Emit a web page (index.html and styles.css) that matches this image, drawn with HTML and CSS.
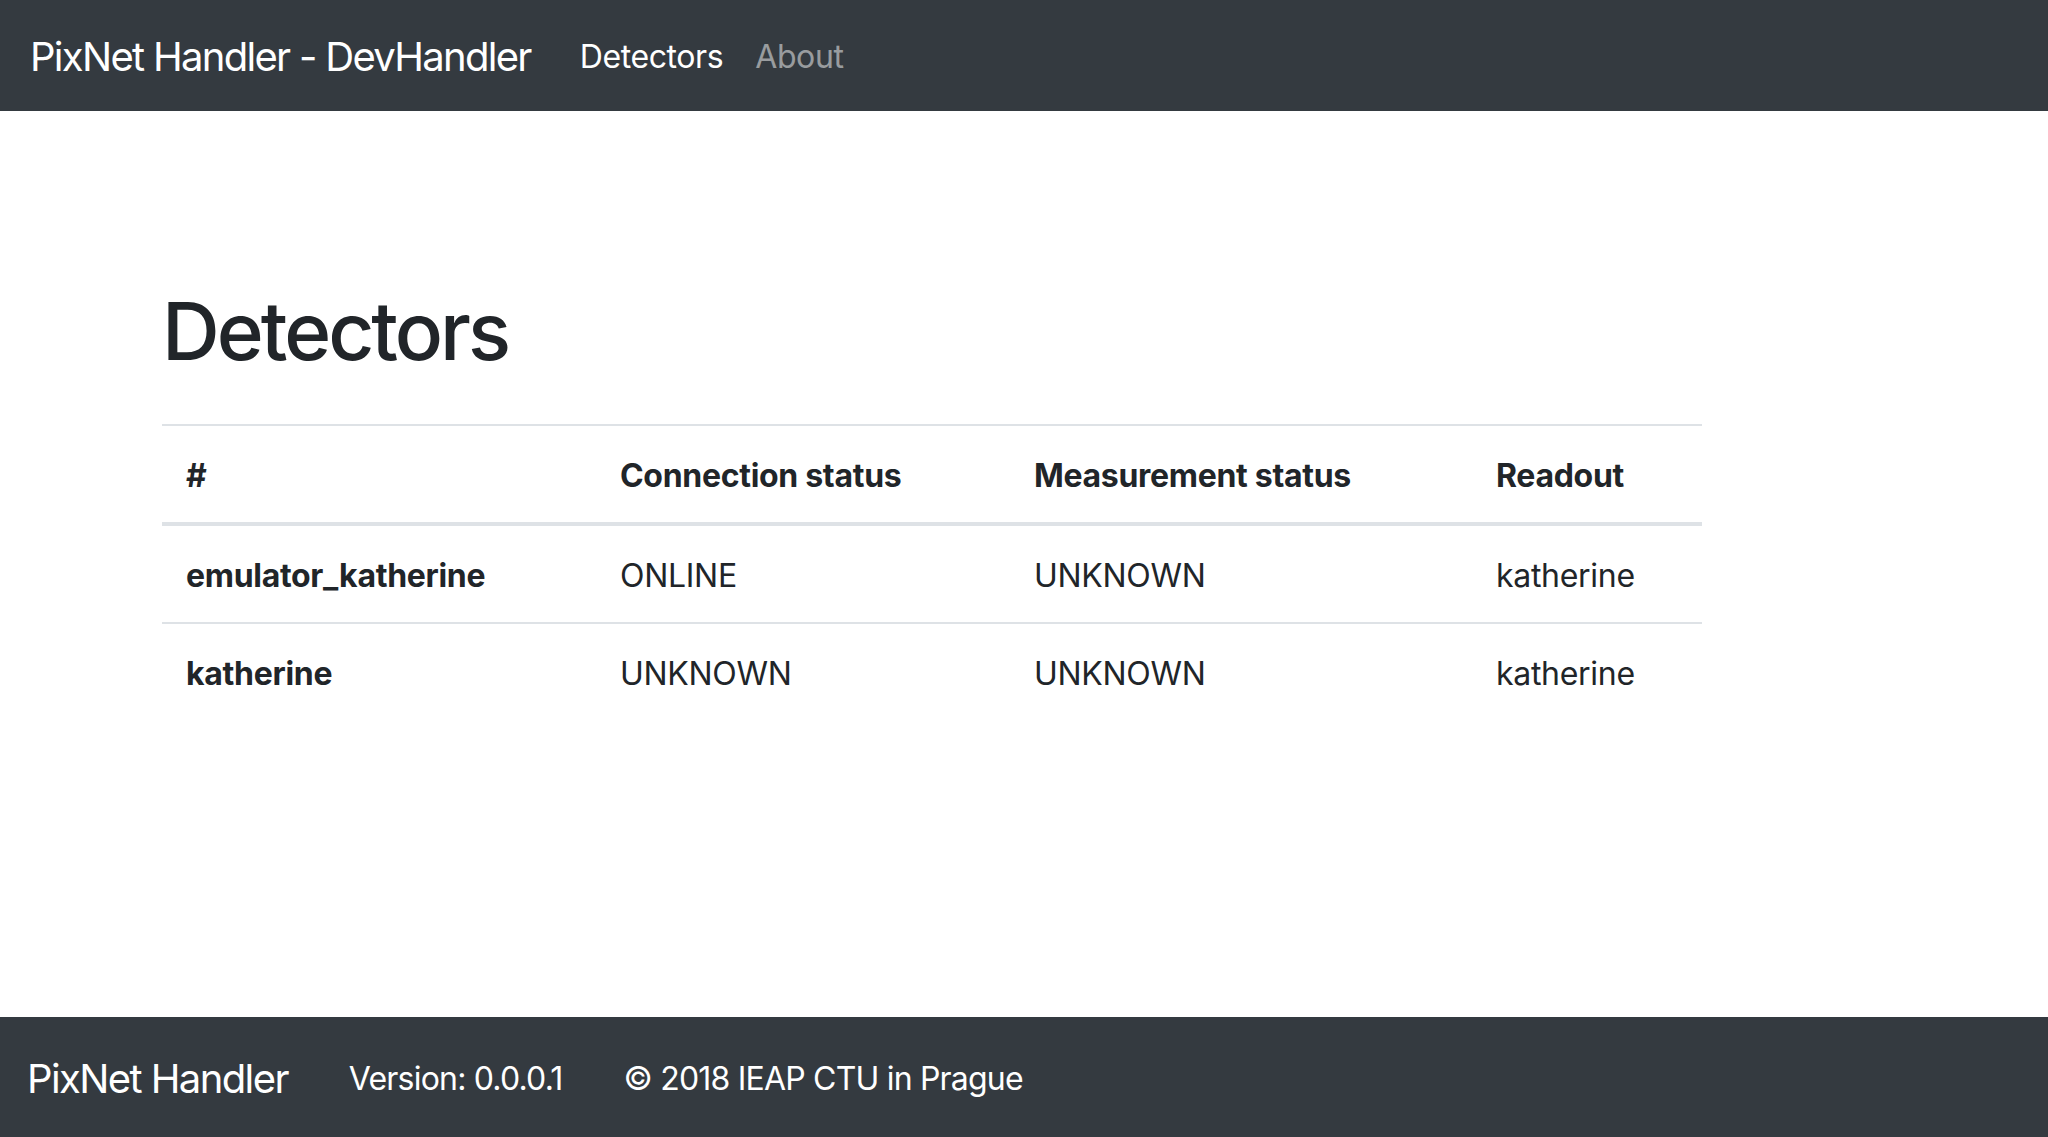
FILE: index.html
```html
<!DOCTYPE html>
<html lang="en">
<head>
<meta charset="utf-8">
<title>PixNet Handler - DevHandler</title>
<link rel="stylesheet" href="styles.css">
</head>
<body>
<div class="page">
  <nav class="navbar">
    <a class="brand" href="#">PixNet Handler - DevHandler</a>
    <ul class="nav">
      <li><a class="nav-link active" href="#">Detectors</a></li>
      <li><a class="nav-link" href="#">About</a></li>
    </ul>
  </nav>

  <main class="main">
    <h1 class="title">Detectors</h1>
    <table class="table">
      <thead>
        <tr>
          <th class="col-id">#</th>
          <th class="col-conn">Connection status</th>
          <th class="col-meas">Measurement status</th>
          <th class="col-read">Readout</th>
        </tr>
      </thead>
      <tbody>
        <tr>
          <th>emulator_katherine</th>
          <td>ONLINE</td>
          <td>UNKNOWN</td>
          <td>katherine</td>
        </tr>
        <tr>
          <th>katherine</th>
          <td>UNKNOWN</td>
          <td>UNKNOWN</td>
          <td>katherine</td>
        </tr>
      </tbody>
    </table>
  </main>

  <footer class="footer">
    <span class="footer-brand">PixNet Handler</span>
    <span class="footer-text">Version: 0.0.0.1</span>
    <span class="footer-text">© 2018 IEAP CTU in Prague</span>
  </footer>
</div>
</body>
</html>
```

FILE: styles.css
```css
html, body {
  margin: 0;
  padding: 0;
}

body {
  font-family: Inter, "Liberation Sans", sans-serif;
  color: #212529;
  background: #fff;
}

.page {
  min-height: 100vh;
  display: flex;
  flex-direction: column;
}

/* Navbar */
.navbar {
  height: 111px;
  box-sizing: border-box;
  background: #343a40;
  display: flex;
  align-items: center;
  padding: 0 30px;
}

.brand {
  font-size: 40px;
  line-height: 60px;
  color: #fff;
  text-decoration: none;
  margin-right: 33px;
  letter-spacing: -1.7px;
  padding-top: 2px;
}

.nav {
  list-style: none;
  margin: 0;
  padding: 0;
  display: flex;
}

.nav-link {
  display: block;
  font-size: 32px;
  line-height: 48px;
  padding: 2px 16px 0;
  color: rgba(255, 255, 255, 0.5);
  text-decoration: none;
  letter-spacing: -0.4px;
}

.nav-link.active {
  color: #fff;
}

/* Main */
.main {
  flex: 1;
  padding: 172px 0 0 162px;
}

.title {
  margin: 0 0 45px;
  font-size: 80px;
  line-height: 96px;
  font-weight: 500;
  letter-spacing: -3px;
}

.table {
  width: 1540px;
  table-layout: fixed;
  border-collapse: collapse;
  font-size: 32px;
  line-height: 48px;
}

.table th,
.table td {
  padding: 26px 24px 22px;
  text-align: left;
  border-top: 2px solid #dee2e6;
  white-space: nowrap;
  letter-spacing: -0.3px;
}

.table th {
  font-weight: 700;
}

.table td {
  font-weight: 400;
}

.table thead th {
  border-bottom: 4px solid #dee2e6;
}

.col-id { width: 386px; }
.col-conn { width: 366px; }
.col-meas { width: 414px; }
.col-read { width: 182px; }

/* Footer */
.footer {
  height: 120px;
  box-sizing: border-box;
  background: #343a40;
  color: #fff;
  display: flex;
  align-items: center;
  gap: 61px;
  padding: 4px 27px 0;
}

.footer-brand {
  font-size: 40px;
  line-height: 60px;
  letter-spacing: -1.6px;
}

.footer-text {
  font-size: 32px;
  line-height: 48px;
  letter-spacing: -0.8px;
}
```
